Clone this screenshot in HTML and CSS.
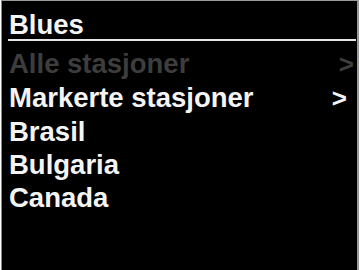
FILE: index.html
```html
<!DOCTYPE html>
<html>
<head>
<meta charset="utf-8">
<link rel="stylesheet" href="styles.css">
</head>
<body>
<div class="screen">
  <div class="title">Blues</div>
  <ul class="menu">
    <li class="item dim"><span class="label">Alle stasjoner</span><span class="chev chev-dim">&gt;</span></li>
    <li class="item"><span class="label">Markerte stasjoner</span><span class="chev chev-sel">&gt;</span></li>
    <li class="item"><span class="label">Brasil</span></li>
    <li class="item"><span class="label">Bulgaria</span></li>
    <li class="item"><span class="label">Canada</span></li>
  </ul>
</div>
</body>
</html>
```

FILE: styles.css
```css
html, body {
  margin: 0;
  padding: 0;
  background: #ffffff;
}
body {
  width: 359px;
  height: 270px;
  overflow: hidden;
  font-family: "Liberation Sans", Arial, sans-serif;
}
.screen {
  margin-left: 1px;
  background: #000;
  border-top: 1px solid #9a9a9a;
  border-left: 1px solid #8a8a8a;
  border-right: 2px solid #9a9a9a;
  padding-top: 9px;
  box-sizing: border-box;
  width: 358px;
  height: 270px;
}
.title {
  margin-left: 6px;
  margin-right: 1px;
  padding-left: 1px;
  font-size: 27.5px;
  font-weight: bold;
  line-height: 29px;
  color: #f4f4f4;
  border-bottom: 2px solid #e6e6e6;
}
.menu {
  list-style: none;
  margin: 6px 0 0 0;
  padding: 0 0 0 7px;
}
.item {
  display: flex;
  align-items: baseline;
  font-size: 27.5px;
  font-weight: bold;
  line-height: 33px;
  color: #f4f4f4;
}
.item.dim {
  color: #3d3d3d;
}
.label {
  flex: 1;
}
.chev {
  font-size: 26px;
}
.chev-dim {
  margin-right: 3px;
}
.chev-sel {
  margin-right: 10px;
}
```
